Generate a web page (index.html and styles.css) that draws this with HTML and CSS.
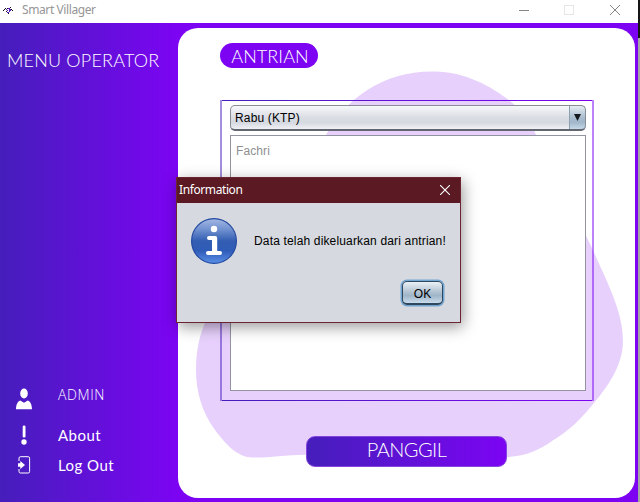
FILE: index.html
```html
<!DOCTYPE html>
<html lang="id">
<head>
<meta charset="utf-8">
<title>Smart Villager</title>
<link rel="stylesheet" href="styles.css">
</head>
<body>
<div class="desktop">
  <div class="window">
    <header class="titlebar">
      <svg class="app-icon" width="10" height="8" viewBox="0 0 10 8" shape-rendering="crispEdges">
        <path fill="#15101c" d="M0 3h1v1H0zM2 1h1v1H2zM9 3h1v1H9zM7 0h1v1H7zM1 2h1v1H1zM4 1h1v1H4zM8 2h1v1H8zM3 4h1v1H3zM5 6h1v1H5z"/>
        <path fill="#5a18b8" d="M3 2h1v1H3zM5 1h2v1H5zM6 2h2v2H6zM4 3h1v1H4zM4 5h2v1H4zM6 4h1v1H6z"/>
      </svg>
      <span class="app-title">Smart Villager</span>
      <svg class="controls" width="110" height="20" viewBox="0 0 110 20">
        <path d="M0 10.500h10" stroke="#858585"/>
        <rect x="45.500" y="5.500" width="9" height="9" fill="none" stroke="#e6e6e6"/>
        <path d="M91 5l10 10M101 5l-10 10" stroke="#858585" fill="none"/>
      </svg>
    </header>
    <div class="body">
      <nav class="sidebar">
        <h1 class="menu-title">MENU OPERATOR</h1>
        <ul class="menu">
          <li class="item admin">
            <svg width="16" height="22" viewBox="0 0 16 22" fill="#fff"><ellipse cx="8" cy="5.500" rx="3.800" ry="5"/><path d="M0 21.300C.2 16 1.500 13.500 4.300 12.400L8 14.700l3.700-2.300C14.500 13.500 15.800 16 16 21.300z"/></svg>
            <span>ADMIN</span>
          </li>
          <li class="item about">
            <svg width="16" height="22" viewBox="0 0 16 22" fill="#fff"><rect x="6.700" y="1.500" width="2.800" height="12" rx="1.300"/><circle cx="8" cy="18" r="2.700"/></svg>
            <span>About</span>
          </li>
          <li class="item logout">
            <svg width="16" height="22" viewBox="0 0 16 22"><path d="M3 7V4.200Q3 2.700 4.500 2.700h7.700q1.400 0 1.400 1.500v13.300q0 1.500-1.400 1.500H4.500Q3 19 3 17.500V15" fill="none" stroke="#fff"/><path fill="#fff" d="M2 9.200h2.300V7l4.700 4-4.700 4v-2.300H2z"/></svg>
            <span>Log Out</span>
          </li>
        </ul>
      </nav>
      <main class="panel">
        <svg class="blob" width="457" height="470" viewBox="178 28 457 470"><path fill="#e7d1fc" d="M433 71.500C469 71 501 92 518 108C532 121 536 135 543 152C556 188 576 212 592 248C608 284 623 312 623 341C623 365 608 386 594 403C582 418 569 431 552 441C538 451 524 457 500 457.500C430 460 350 454 306 454.700C284 455 268 458 252 457.500C240 457 229 449 215 430C202 412 196 392 196 370C196 348 200 335 206 320C220 285 262 260 279 232C300 197 311 155 326 135C346 98 384 71 433 71.500Z"/></svg>
        <h2 class="badge">ANTRIAN</h2>
        <section class="queue">
          <div class="combo"><span>Rabu (KTP)</span><i class="arrow"><svg width="7" height="7" viewBox="0 0 7 7"><path d="M0 0h7L3.500 7z" fill="#14181d"/></svg></i></div>
          <div class="list">Fachri</div>
        </section>
        <button class="call">PANGGIL</button>
      </main>
    </div>
  </div>
  <div class="edge"></div>
  <div class="dialog">
    <div class="dialog-title"><span>Information</span>
      <svg width="10" height="10" viewBox="0 0 10 10"><path d="M0 0l10 10M10 0L0 10" stroke="#fff" stroke-width="1.100"/></svg>
    </div>
    <div class="dialog-main">
      <svg width="46" height="46" viewBox="0 0 46 46">
        <defs><linearGradient id="info" x2="0" y2="1"><stop offset="0" stop-color="#a5b8e3"/><stop offset=".25" stop-color="#6f90cf"/><stop offset=".5" stop-color="#325db2"/><stop offset=".72" stop-color="#2f5cb8"/><stop offset="1" stop-color="#5a90e8"/></linearGradient></defs>
        <circle cx="23" cy="23" r="22.400" fill="url(#info)" stroke="#2349a0" stroke-width="1.200"/>
        <circle cx="23" cy="11" r="3.200" fill="#fff"/>
        <path d="M18 20h6.200v15M17 35h12" fill="none" stroke="#fff" stroke-width="4" stroke-linecap="round" stroke-linejoin="round"/>
        <path d="M21 20h5v15h-5z" fill="#fff"/>
      </svg>
      <p>Data telah dikeluarkan dari antrian!</p>
    </div>
    <div class="dialog-actions"><button class="ok">OK</button></div>
  </div>
</div>
</body>
</html>
```
FILE: styles.css
```css
* { box-sizing: border-box; }
body { margin: 0; overflow: hidden; font-family: "Liberation Sans", Arial, sans-serif; }
h1, h2, p, ul { margin: 0; padding: 0; font-weight: 300; }
button { padding: 0; }
svg { display: block; flex: none; }

.desktop { position: relative; display: flex; width: 640px; height: 502px; }
.window { width: 638px; display: flex; flex-direction: column; }
.edge { width: 2px; background: linear-gradient(#151515 38px, #a5a5a5 38px); }

.titlebar { height: 23px; display: flex; align-items: center; padding: 0 9px 3px 3px; background: #fff; }
.app-icon { margin-top: 2px; }
.app-title { margin-left: 9px; font: 12px/18px "Noto Sans", sans-serif; letter-spacing: -.4px; color: #969696; white-space: nowrap; }
.controls { margin-left: auto; }

.body { flex: 1; display: flex; padding: 5px 3px 4px 0; background: linear-gradient(90deg, #451ebb 0, #7c04f3 178px); }
.sidebar { width: 178px; display: flex; flex-direction: column; justify-content: space-between; color: #fff; }
.menu-title { padding: 20px 0 0 7px; font: 300 18px/24px Lato, sans-serif; letter-spacing: .2px; white-space: nowrap; }
.menu { list-style: none; padding: 0 0 18px 16px; }
.item { display: flex; align-items: center; gap: 26px; height: 30px; font: 15px/22px Lato, sans-serif; letter-spacing: .45px; }
.item span { margin-top: -1px; }
.admin { height: 36px; margin-bottom: 3px; font: 300 14px/20px "Open Sans", sans-serif; letter-spacing: .6px; }
.admin span { margin-top: -8px; }

.panel { position: relative; flex: 1; padding: 15px 41px 0 42px; border-radius: 20px; background: #fff; overflow: hidden; }
.blob { position: absolute; left: 0; top: 0; }
.badge { position: relative; width: 98px; height: 25px; border-radius: 13px; padding-left: 2px; background: #7c04f3; color: #fff; font: 300 18px/27px Lato, sans-serif; letter-spacing: .1px; text-align: center; }
.queue { position: relative; width: 374px; height: 301px; margin-top: 32px; display: flex; flex-direction: column; gap: 4px; padding: 5px 6px 10px 8px; border: solid; border-color: transparent rgba(124, 4, 243, .5) transparent rgba(69, 30, 187, .5); border-width: 0 2px; background: linear-gradient(90deg, #451ebb, #7c04f3) top / 100% 1px no-repeat, linear-gradient(90deg, #451ebb, #7c04f3) bottom / 100% 1px no-repeat; }
.combo { height: 26px; display: flex; justify-content: space-between; border: 1px solid #888d98; border-bottom: 2px solid #62666f; border-radius: 5px; padding-left: 4px; overflow: hidden; background: linear-gradient(#f7f8fa, #dadde3 50%, #d5d9e0 72%, #f0f1f5); font-size: 12px; line-height: 25px; letter-spacing: .15px; color: #000; }
.arrow { width: 17px; margin: -1px -1px -2px 0; display: grid; place-items: center; border: 1px solid #405467; border-left-color: #8ca0b2; border-bottom-width: 2px; border-radius: 0 5px 5px 0; background: linear-gradient(#e6edf3, #a9bdce 50%, #a0b6c9 70%, #c5d9e8); }
.list { flex: 1; border: 1px solid #92959f; background: #fff; padding: 7px 5px; font-size: 12px; line-height: 16px; color: #8e8f91; letter-spacing: .1px; }
.call { position: relative; display: block; width: 201px; height: 31px; margin: 35px 0 0 86px; padding-bottom: 4px; border: 1px solid #8446dd; border-radius: 9px; background: linear-gradient(90deg, #451ebb, #7c04f3); color: #fff; font: 300 20px/25px Lato, sans-serif; letter-spacing: -.55px; }

.dialog { position: absolute; left: 176px; top: 177px; width: 285px; height: 146px; border: 1px solid #6d2431; background: #d6d9df; box-shadow: 2px 4px 14px rgba(0, 0, 0, .4); display: flex; flex-direction: column; }
.dialog-title { height: 25px; display: flex; align-items: center; justify-content: space-between; padding: 0 10px 1px 2px; background: #5b1923; color: #fff; font: 12px/24px "Noto Sans", sans-serif; letter-spacing: -.4px; }
.dialog-main { display: flex; align-items: center; gap: 17px; margin: 15px 0 0 14px; font-size: 12px; letter-spacing: .16px; color: #000; white-space: nowrap; }
.dialog-actions { display: flex; justify-content: flex-end; padding: 17px 17px 0 0; }
.ok { width: 41px; height: 24px; border: 1px solid #30485e; border-bottom-width: 2px; border-radius: 5px; padding-top: 1px; background: linear-gradient(#eaf0f5, #b1c2d1 48%, #9fb5c8 65%, #c9dcec); box-shadow: 0 0 0 1.500px #72a5d2; color: #000; font: 12px/22px "Liberation Sans", Arial, sans-serif; }
```
